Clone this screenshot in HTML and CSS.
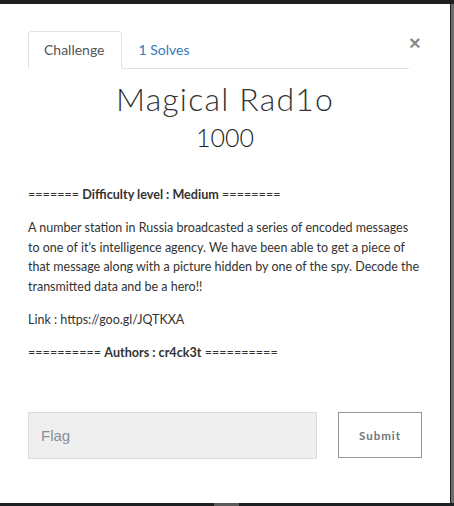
FILE: index.html
```html
<!DOCTYPE html>
<html>
<head>
<meta charset="utf-8">
<link rel="stylesheet" href="styles.css">
</head>
<body>
<div class="topbar"></div>
<div class="row">
  <div class="modal">
    <button class="close" aria-label="Close">&times;</button>
    <ul class="nav">
      <li class="tab active">Challenge</li>
      <li class="tab link">1 Solves</li>
    </ul>
    <h2 class="title">Magical Rad1o</h2>
    <h3 class="value">1000</h3>
    <div class="desc">
      <p class="small">======= <b>Difficulty level : Medium</b> ========</p>
      <p>A number station in Russia broadcasted a series of encoded messages to one of it's intelligence agency. We have been able to get a piece of that message along with a picture hidden by one of the spy. Decode the transmitted data and be a hero!!</p>
      <p>Link : https://goo.gl/JQTKXA</p>
      <p class="small">========== <b>Authors : cr4ck3t</b> ==========</p>
    </div>
    <form class="submit-row">
      <input class="flag" type="text" placeholder="Flag">
      <button class="submit" type="button">Submit</button>
    </form>
  </div>
  <div class="scroll"></div>
</div>
<div class="bottombar"><span class="thumb"></span></div>
</body>
</html>
```
FILE: styles.css
```css
html, body {
  margin: 0;
  padding: 0;
  background: #1d1e1f;
  width: 454px;
  height: 506px;
  overflow: hidden;
}
.topbar {
  height: 4px;
  background: #1d1e1f;
}
.row {
  display: flex;
  height: 499px;
}
.modal {
  position: relative;
  width: 450px;
  height: 499px;
  background: #fff;
  box-sizing: border-box;
  padding: 27px 0 0 28px;
  font-family: Lato, sans-serif;
  color: #333;
}
.scroll {
  width: 4px;
  border-left: 1px solid #1d1e1f;
  background: #6e6e6e;
  box-sizing: border-box;
}
.bottombar {
  height: 3px;
  background: #1d1e1f;
  position: relative;
}
.thumb {
  position: absolute;
  left: 214px;
  width: 25px;
  top: 0;
  height: 3px;
  background: #5a5a5a;
}
.close {
  position: absolute;
  left: 409px;
  top: 29px;
  border: 0;
  background: transparent;
  padding: 0;
  font-family: "Liberation Sans", Arial, sans-serif;
  font-size: 20px;
  font-weight: bold;
  line-height: 1;
  color: #000;
  opacity: .45;
}
.nav {
  display: flex;
  list-style: none;
  margin: 0;
  padding: 0;
  width: 381px;
  border-bottom: 1px solid #dee2e6;
}
.tab {
  font-size: 14px;
  line-height: 20px;
  padding: 8px 15px;
  margin-bottom: -1px;
  border: 1px solid transparent;
  border-radius: 4px 4px 0 0;
  margin-right: 1px;
}
.tab.active {
  color: #555;
  border-color: #dee2e6 #dee2e6 #fff;
  background: #fff;
  padding-right: 16px;
}
.tab.link {
  color: #337ab7;
}
.title {
  width: 394px;
  margin: 12px 0 0;
  text-align: center;
  font-weight: 300;
  font-size: 32px;
  line-height: 36px;
  letter-spacing: 1.2px;
  color: #333;
}
.value {
  width: 394px;
  margin: 5px 0 0;
  text-align: center;
  font-weight: 300;
  font-size: 25px;
  line-height: 30px;
  color: #222;
}
.desc {
  width: 394px;
  margin-top: 33px;
  font-size: 12.5px;
  line-height: 19.5px;
  color: #333;
}
.desc p {
  margin: 0 0 13.5px;
}
.desc p.small {
  font-size: 12.6px;
}
.submit-row {
  display: flex;
  gap: 21px;
  margin-top: 50px;
}
.flag {
  width: 289px;
  height: 47px;
  box-sizing: border-box;
  background: #efefef;
  border: 1px solid #d9dde1;
  padding: 0 12px;
  font-family: "Liberation Sans", Arial, sans-serif;
  font-size: 15px;
  color: #333;
  outline: none;
}
.flag::placeholder {
  color: #868e96;
}
.submit {
  width: 84px;
  height: 46px;
  box-sizing: border-box;
  background: #fff;
  border: 1px solid #8f979e;
  font-family: Lato, sans-serif;
  font-weight: bold;
  font-size: 11.5px;
  letter-spacing: 1px;
  color: #6c757d;
  padding: 0;
}
```
